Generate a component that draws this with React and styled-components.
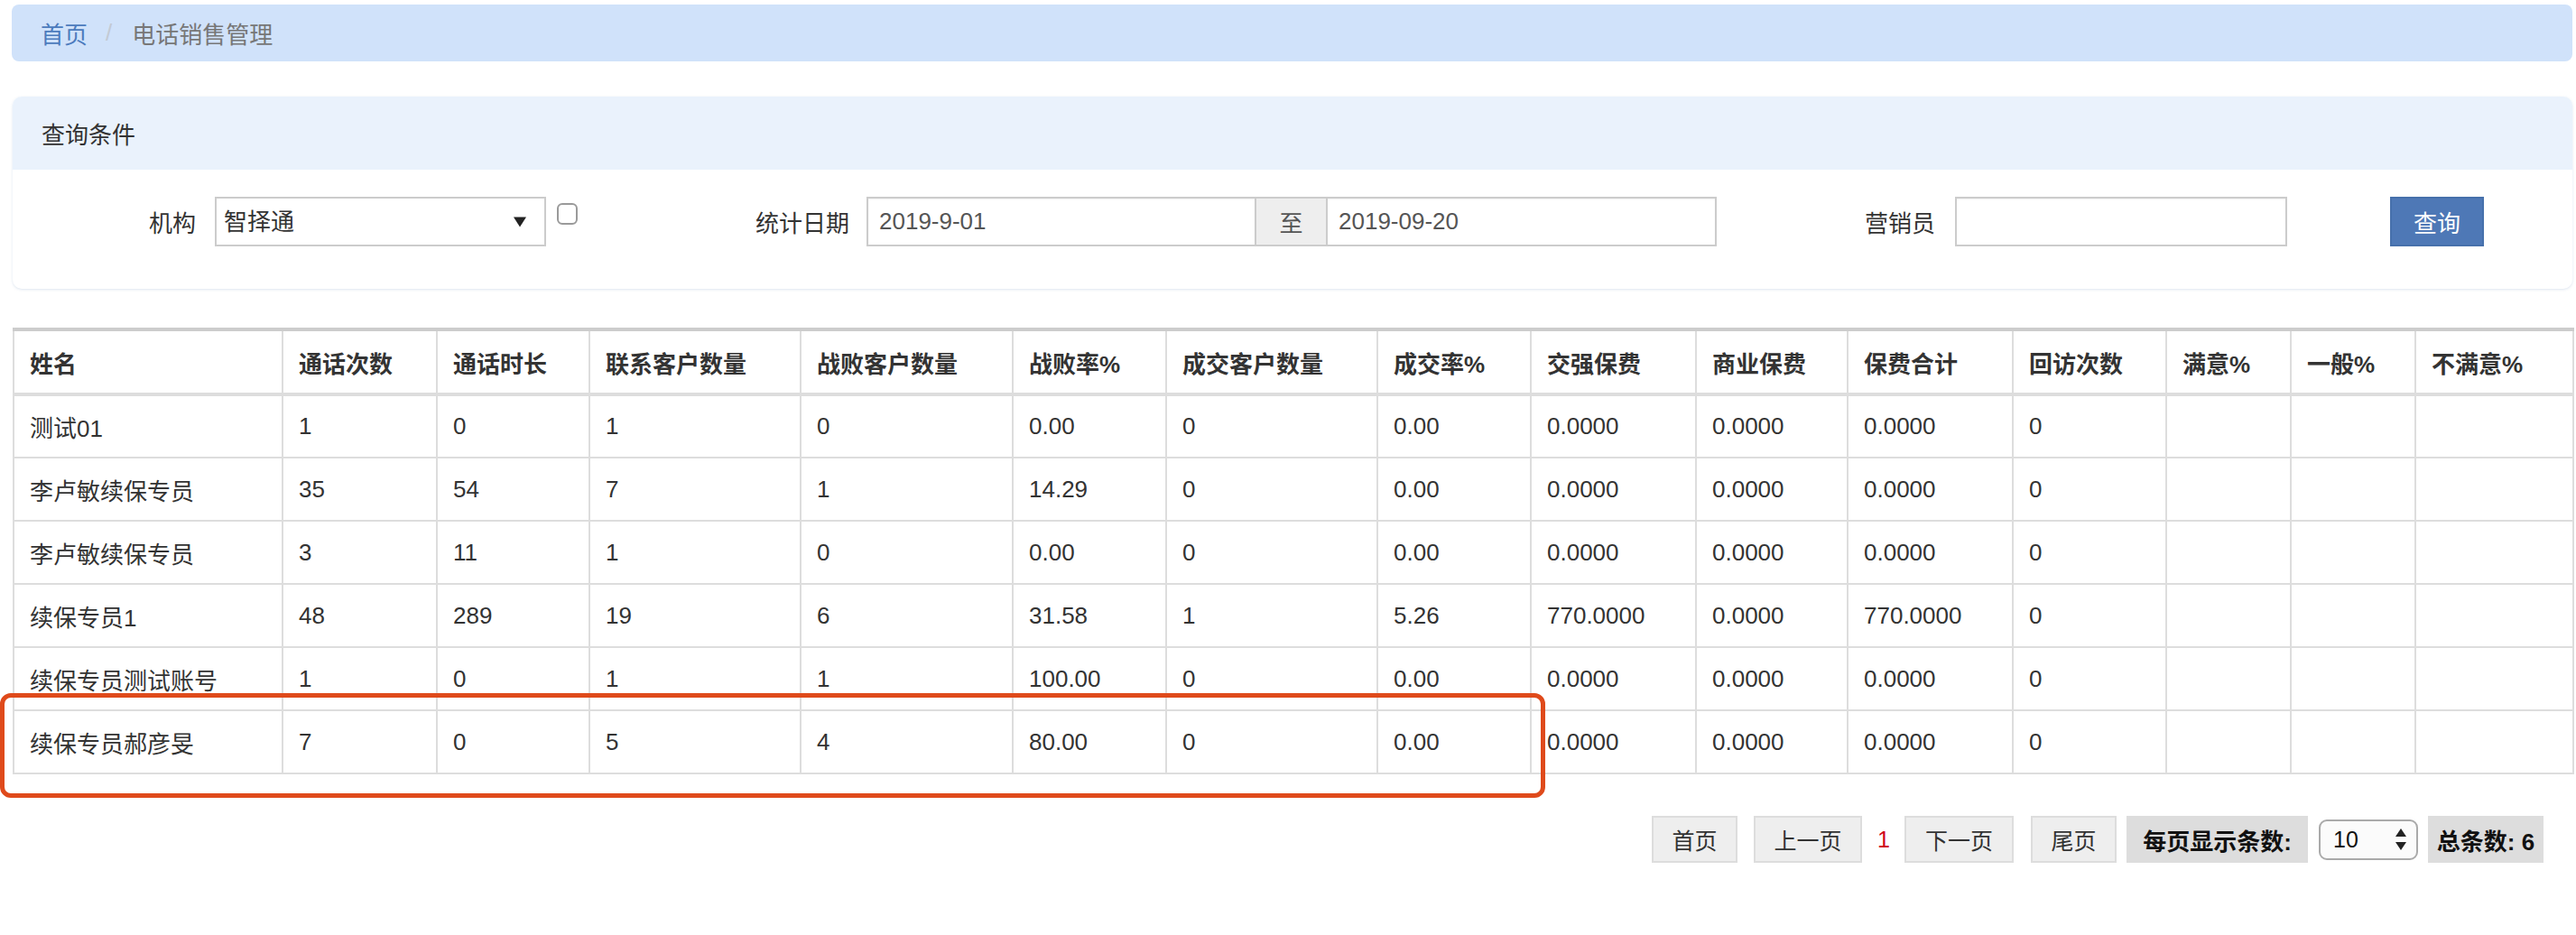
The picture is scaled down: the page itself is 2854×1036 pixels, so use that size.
import React from "react";
import styled, { createGlobalStyle } from "styled-components";

const GlobalStyle = createGlobalStyle`
  body {
    margin: 0;
    background: #fff;
    font-family: "Liberation Sans", "Noto Sans CJK SC", sans-serif;
    color: #333;
  }
  * { box-sizing: border-box; }
`;

const columns = [
  { title: "姓名", width: 298 },
  { title: "通话次数", width: 171 },
  { title: "通话时长", width: 169 },
  { title: "联系客户数量", width: 234 },
  { title: "战败客户数量", width: 235 },
  { title: "战败率%", width: 170 },
  { title: "成交客户数量", width: 234 },
  { title: "成交率%", width: 170 },
  { title: "交强保费", width: 183 },
  { title: "商业保费", width: 168 },
  { title: "保费合计", width: 183 },
  { title: "回访次数", width: 170 },
  { title: "满意%", width: 138 },
  { title: "一般%", width: 138 },
  { title: "不满意%", width: 175 },
];

const rows = [
  ["测试01", "1", "0", "1", "0", "0.00", "0", "0.00", "0.0000", "0.0000", "0.0000", "0", "", "", ""],
  ["李卢敏续保专员", "35", "54", "7", "1", "14.29", "0", "0.00", "0.0000", "0.0000", "0.0000", "0", "", "", ""],
  ["李卢敏续保专员", "3", "11", "1", "0", "0.00", "0", "0.00", "0.0000", "0.0000", "0.0000", "0", "", "", ""],
  ["续保专员1", "48", "289", "19", "6", "31.58", "1", "5.26", "770.0000", "0.0000", "770.0000", "0", "", "", ""],
  ["续保专员测试账号", "1", "0", "1", "1", "100.00", "0", "0.00", "0.0000", "0.0000", "0.0000", "0", "", "", ""],
  ["续保专员郝彦旻", "7", "0", "5", "4", "80.00", "0", "0.00", "0.0000", "0.0000", "0.0000", "0", "", "", ""],
];

const Page = styled.div`
  position: relative;
  padding: 5px 4px 60px 14px;
`;

const Breadcrumb = styled.div`
  height: 63px;
  margin-left: -1px;
  background: #d0e2fa;
  border-radius: 8px;
  display: flex;
  align-items: center;
  padding-left: 32px;
  font-size: 26px;
`;

const Crumb = styled.span`
  color: ${(p) => (p.$active ? "#777" : "#4c7bbd")};
`;

const Sep = styled.span`
  color: #c3cad4;
  margin: 0 22px 0 20px;
`;

const Panel = styled.section`
  margin-top: 39px;
  border-radius: 10px;
  overflow: hidden;
  background: #fff;
  box-shadow: 0 1px 3px rgba(120, 150, 190, 0.25);
`;

const PanelHeader = styled.div`
  height: 81px;
  background: #eaf2fc;
  display: flex;
  align-items: center;
  padding-left: 32px;
  font-size: 26px;
  color: #333;
`;

const FormRow = styled.div`
  display: flex;
  align-items: center;
  padding: 30px 0 47px 0;
`;

const Label = styled.label`
  width: ${(p) => p.$w}px;
  margin-right: ${(p) => p.$gap}px;
  text-align: right;
  font-size: 26px;
  color: #333;
  flex-shrink: 0;
`;

const SelectWrap = styled.div`
  position: relative;
  width: 367px;
  height: 55px;
`;

const Select = styled.select`
  appearance: none;
  width: 100%;
  height: 100%;
  border: 2px solid #ccc;
  background: #fff;
  padding: 0 0 0 8px;
  font-family: inherit;
  font-size: 26px;
  color: #333;
  border-radius: 0;
`;

const Caret = styled.span`
  position: absolute;
  right: 22px;
  top: 50%;
  transform: translateY(-50%);
  width: 0;
  height: 0;
  border-left: 7px solid transparent;
  border-right: 7px solid transparent;
  border-top: 11px solid #222;
  pointer-events: none;
`;

const Check = styled.input.attrs({ type: "checkbox" })`
  appearance: none;
  margin: -18px 0 0 12px;
  width: 23px;
  height: 24px;
  border: 2px solid #9a9a9a;
  border-radius: 6px;
  background: #fff;
`;

const InputGroup = styled.div`
  display: flex;
  height: 55px;
`;

const TextInput = styled.input`
  width: ${(p) => p.$w}px;
  height: 55px;
  border: 2px solid #ccc;
  padding: 0 12px;
  font-family: inherit;
  font-size: 26px;
  color: #555;
  box-shadow: inset 0 1px 2px rgba(0, 0, 0, 0.06);
  outline: none;
`;

const Addon = styled.span`
  width: 77px;
  display: flex;
  align-items: center;
  justify-content: center;
  background: #eee;
  border-top: 2px solid #ccc;
  border-bottom: 2px solid #ccc;
  font-size: 26px;
  color: #555;
`;

const PrimaryButton = styled.button`
  margin-left: 114px;
  width: 104px;
  height: 55px;
  border: 2px solid #4670ab;
  background: #4e78b6;
  color: #fff;
  font-family: inherit;
  font-size: 26px;
  border-radius: 0;
`;

const Table = styled.table`
  margin-top: 43px;
  width: 2836px;
  table-layout: fixed;
  border-collapse: collapse;
  font-size: 26px;
  color: #333;

  th, td {
    border: 2px solid #ddd;
    padding: 0 17px;
    text-align: left;
    vertical-align: middle;
    white-space: nowrap;
  }
  th {
    height: 72px;
    font-weight: bold;
    border-top: 4px solid #ccc;
    border-bottom: 4px solid #ddd;
  }
  td {
    height: 70px;
  }
`;

const Pager = styled.div`
  margin-top: 46px;
  margin-right: 32px;
  display: flex;
  justify-content: flex-end;
  align-items: center;
  font-size: 25px;
`;

const PageButton = styled.button`
  height: 52px;
  width: ${(p) => p.$w}px;
  padding: 0;
  margin-left: ${(p) => p.$ml}px;
  border: 2px solid #ddd;
  background: #eee;
  color: #333;
  font-family: inherit;
  font-size: 25px;
  border-radius: 0;
`;

const Current = styled.span`
  width: 10px;
  margin-left: 17px;
  color: #d0021b;
  font-size: 25px;
  text-align: center;
`;

const InfoBox = styled.span`
  height: 52px;
  width: ${(p) => p.$w}px;
  margin-left: ${(p) => p.$ml}px;
  display: flex;
  align-items: center;
  justify-content: center;
  background: #ddd;
  color: #111;
  font-weight: bold;
  font-size: 26px;
  white-space: nowrap;
`;

const SizeSelect = styled.div`
  position: relative;
  margin-left: 12px;
  width: 110px;
  height: 45px;
  border: 2px solid #aaa;
  border-radius: 9px;
  background: #fbfbfb;
  display: flex;
  align-items: center;
  padding-left: 14px;
  font-size: 25px;
  color: #111;
`;

const Spinner = styled.svg`
  position: absolute;
  right: 10px;
  top: 50%;
  transform: translateY(-50%);
`;

const Highlight = styled.div`
  position: absolute;
  left: 0;
  top: 768px;
  width: 1712px;
  height: 116px;
  border: 5px solid #df4a1b;
  border-radius: 12px;
  pointer-events: none;
`;

export default function App() {
  return (
    <Page>
      <GlobalStyle />
      <Breadcrumb>
        <Crumb>首页</Crumb>
        <Sep>/</Sep>
        <Crumb $active>电话销售管理</Crumb>
      </Breadcrumb>

      <Panel>
        <PanelHeader>查询条件</PanelHeader>
        <FormRow>
          <Label $w={203} $gap={21}>机构</Label>
          <SelectWrap>
            <Select defaultValue="智择通">
              <option>智择通</option>
            </Select>
            <Caret />
          </SelectWrap>
          <Check />
          <Label $w={301} $gap={19}>统计日期</Label>
          <InputGroup>
            <TextInput $w={432} defaultValue="2019-9-01" />
            <Addon>至</Addon>
            <TextInput $w={433} defaultValue="2019-09-20" />
          </InputGroup>
          <Label $w={242} $gap={22}>营销员</Label>
          <TextInput $w={368} />
          <PrimaryButton>查询</PrimaryButton>
        </FormRow>
      </Panel>

      <Table>
        <colgroup>
          {columns.map((c) => (
            <col key={c.title} style={{ width: c.width }} />
          ))}
        </colgroup>
        <thead>
          <tr>
            {columns.map((c) => (
              <th key={c.title}>{c.title}</th>
            ))}
          </tr>
        </thead>
        <tbody>
          {rows.map((r, i) => (
            <tr key={i}>
              {r.map((v, j) => (
                <td key={j}>{v}</td>
              ))}
            </tr>
          ))}
        </tbody>
      </Table>

      <Pager>
        <PageButton $w={95} $ml={0}>首页</PageButton>
        <PageButton $w={120} $ml={18}>上一页</PageButton>
        <Current>1</Current>
        <PageButton $w={121} $ml={20}>下一页</PageButton>
        <PageButton $w={95} $ml={19}>尾页</PageButton>
        <InfoBox $w={201} $ml={11}>每页显示条数:</InfoBox>
        <SizeSelect>
          10
          <Spinner width="14" height="28" viewBox="0 0 14 28">
            <path d="M7 2 L13 11 L1 11 Z" fill="#222" />
            <path d="M7 26 L13 17 L1 17 Z" fill="#222" />
          </Spinner>
        </SizeSelect>
        <InfoBox $w={128} $ml={11}>总条数: 6</InfoBox>
      </Pager>

      <Highlight />
    </Page>
  );
}
